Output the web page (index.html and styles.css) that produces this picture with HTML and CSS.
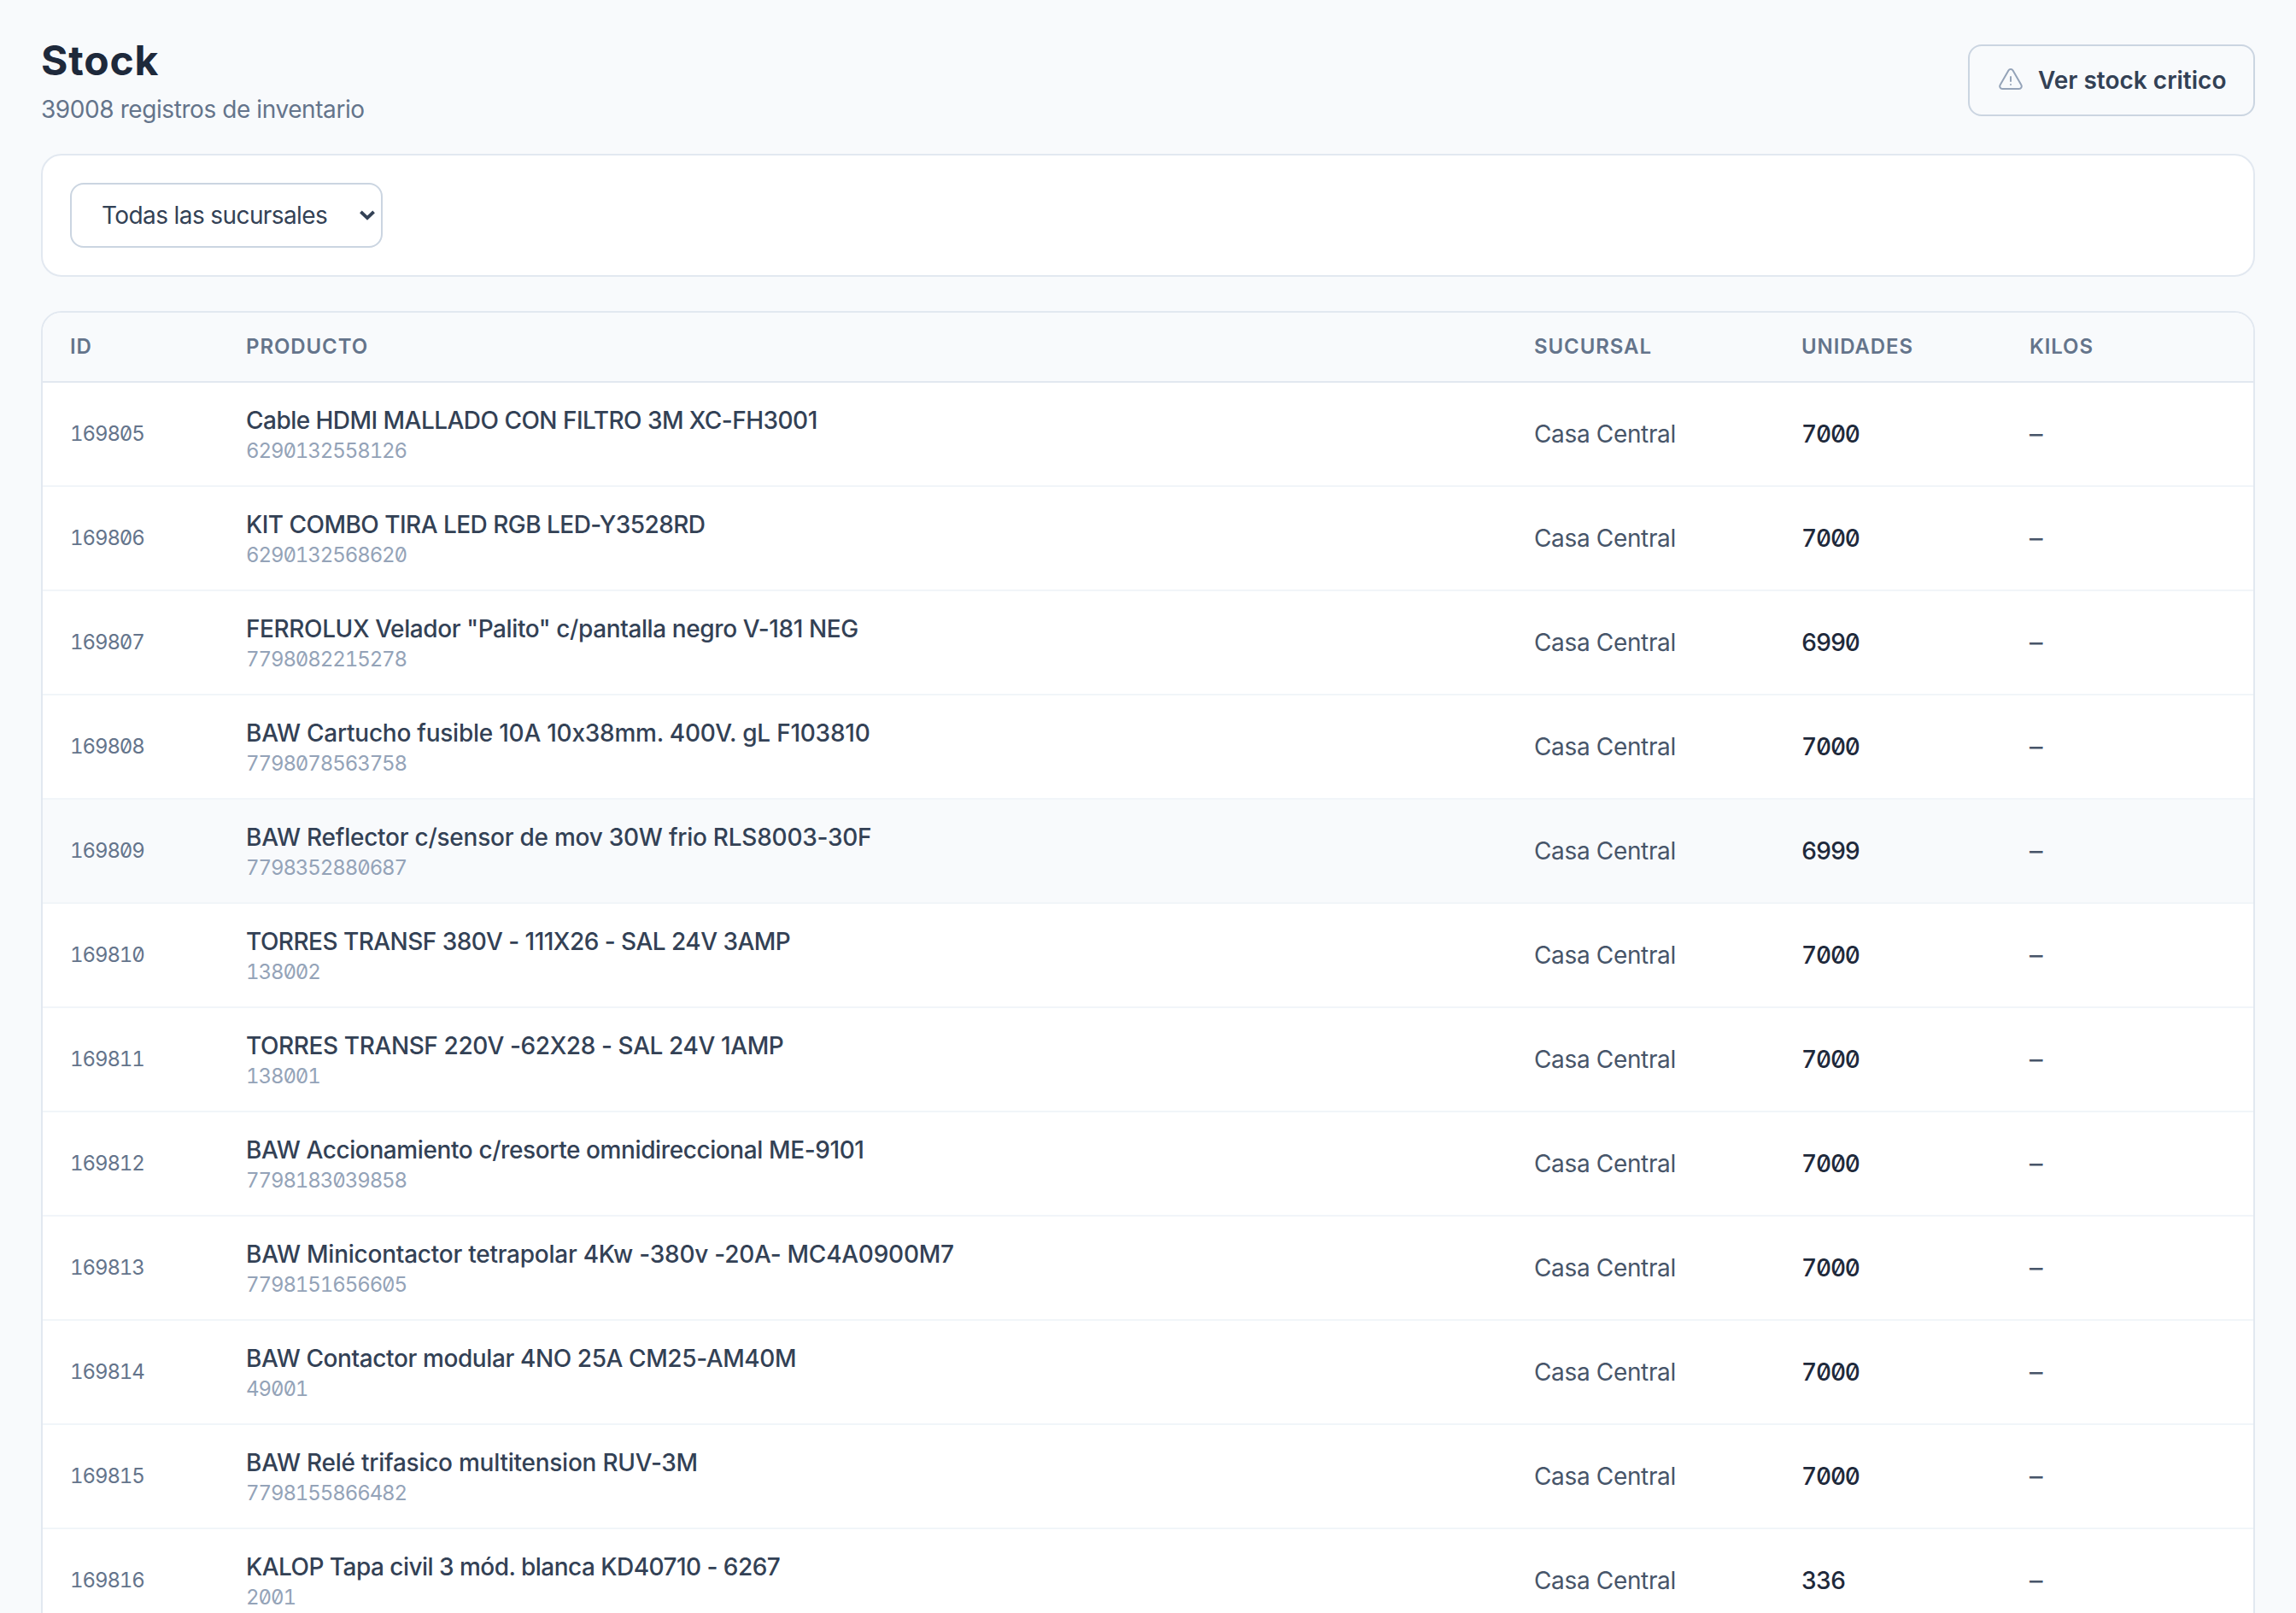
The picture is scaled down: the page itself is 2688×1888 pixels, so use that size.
FILE: index.html
```html
<!DOCTYPE html>
<html lang="es">
<head>
<meta charset="utf-8">
<title>Stock</title>
<link rel="stylesheet" href="styles.css">
</head>
<body>
<main class="page">
  <header class="page-header">
    <div>
      <h1 class="title">Stock</h1>
      <p class="subtitle">39008 registros de inventario</p>
    </div>
    <button class="btn" type="button">
      <svg class="btn-icon" viewBox="0 0 24 24" fill="none" stroke="currentColor" stroke-width="1.5" stroke-linecap="round" stroke-linejoin="round"><path d="M12 9v3.75m-9.303 3.376c-.866 1.5.217 3.374 1.948 3.374h14.71c1.73 0 2.813-1.874 1.948-3.374L13.949 3.378c-.866-1.5-3.032-1.5-3.898 0L2.697 16.126ZM12 15.75h.007v.008H12v-.008Z"/></svg>
      <span class="btn-label">Ver stock critico</span>
    </button>
  </header>

  <section class="filters">
    <div class="select">
      <span class="select-value">Todas las sucursales</span>
      <svg class="select-arrow" viewBox="0 0 18 12" fill="none" stroke="currentColor" stroke-width="3.8"><path d="M1.4 1.8 9 9.2l7.6-7.4"/></svg>
    </div>
  </section>

  <section class="table-card">
    <table class="table">
      <colgroup><col class="col-id"><col class="col-product"><col class="col-branch"><col class="col-units"><col class="col-kilos"></colgroup>
      <thead>
        <tr><th>ID</th><th>Producto</th><th>Sucursal</th><th>Unidades</th><th>Kilos</th></tr>
      </thead>
      <tbody>
        <tr><td class="id">169805</td><td><div class="name name-tight">Cable HDMI MALLADO CON FILTRO 3M XC-FH3001</div><div class="code">6290132558126</div></td><td class="branch">Casa Central</td><td class="units">7000</td><td class="kilos">–</td></tr>
        <tr><td class="id">169806</td><td><div class="name name-tight">KIT COMBO TIRA LED RGB LED-Y3528RD</div><div class="code">6290132568620</div></td><td class="branch">Casa Central</td><td class="units">7000</td><td class="kilos">–</td></tr>
        <tr><td class="id">169807</td><td><div class="name">FERROLUX Velador "Palito" c/pantalla negro V-181 NEG</div><div class="code">7798082215278</div></td><td class="branch">Casa Central</td><td class="units">6990</td><td class="kilos">–</td></tr>
        <tr><td class="id">169808</td><td><div class="name name-loose">BAW Cartucho fusible 10A 10x38mm. 400V. gL F103810</div><div class="code">7798078563758</div></td><td class="branch">Casa Central</td><td class="units">7000</td><td class="kilos">–</td></tr>
        <tr class="is-hovered"><td class="id">169809</td><td><div class="name name-loose">BAW Reflector c/sensor de mov 30W frio RLS8003-30F</div><div class="code">7798352880687</div></td><td class="branch">Casa Central</td><td class="units">6999</td><td class="kilos">–</td></tr>
        <tr><td class="id">169810</td><td><div class="name name-tight">TORRES TRANSF 380V - 111X26 - SAL 24V 3AMP</div><div class="code">138002</div></td><td class="branch">Casa Central</td><td class="units">7000</td><td class="kilos">–</td></tr>
        <tr><td class="id">169811</td><td><div class="name">TORRES TRANSF 220V -62X28 - SAL 24V 1AMP</div><div class="code">138001</div></td><td class="branch">Casa Central</td><td class="units">7000</td><td class="kilos">–</td></tr>
        <tr><td class="id">169812</td><td><div class="name">BAW Accionamiento c/resorte omnidireccional ME-9101</div><div class="code">7798183039858</div></td><td class="branch">Casa Central</td><td class="units">7000</td><td class="kilos">–</td></tr>
        <tr><td class="id">169813</td><td><div class="name name-loose">BAW Minicontactor tetrapolar 4Kw -380v -20A- MC4A0900M7</div><div class="code">7798151656605</div></td><td class="branch">Casa Central</td><td class="units">7000</td><td class="kilos">–</td></tr>
        <tr><td class="id">169814</td><td><div class="name">BAW Contactor modular 4NO 25A CM25-AM40M</div><div class="code">49001</div></td><td class="branch">Casa Central</td><td class="units">7000</td><td class="kilos">–</td></tr>
        <tr><td class="id">169815</td><td><div class="name name-loose">BAW Relé trifasico multitension RUV-3M</div><div class="code">7798155866482</div></td><td class="branch">Casa Central</td><td class="units">7000</td><td class="kilos">–</td></tr>
        <tr><td class="id">169816</td><td><div class="name name-tight">KALOP Tapa civil 3 mód. blanca KD40710 - 6267</div><div class="code">2001</div></td><td class="branch">Casa Central</td><td class="units">336</td><td class="kilos">–</td></tr>
      </tbody>
    </table>
  </section>
</main>
</body>
</html>
```
FILE: styles.css
```css
*, *::before, *::after { box-sizing: border-box; }

body {
  margin: 0;
  height: 1888px;
  overflow: hidden;
  background: #f8fafc;
  color: #334155;
  font-family: Inter, "Liberation Sans", sans-serif;
  font-size: 28px;
  line-height: 40px;
  -webkit-font-smoothing: antialiased;
}

.page { padding: 40px 48px 0; }

.page-header {
  display: flex;
  justify-content: space-between;
  align-items: flex-start;
  height: 140px;
}

.title {
  margin: 0;
  color: #1e293b;
  font-size: 48px;
  line-height: 62px;
  font-weight: 700;
  letter-spacing: 0.8px;
}

.subtitle {
  margin: 6px 0 0;
  color: #64748b;
  letter-spacing: -0.42px;
}

.btn {
  display: flex;
  align-items: center;
  gap: 16px;
  width: 336px;
  height: 84px;
  margin-top: 12px;
  padding: 0 32px;
  border: 2px solid #cbd5e1;
  border-radius: 16px;
  background: #f8fafc;
  color: #334155;
  font: inherit;
  font-weight: 600;
  white-space: nowrap;
}
.btn-icon { flex: none; width: 32px; height: 32px; color: #94a3b8; }
.btn-label { letter-spacing: 0; }

.filters {
  height: 144px;
  padding: 32px;
  border: 2px solid #e2e8f0;
  border-radius: 24px;
  background: #fff;
}

.select {
  display: flex;
  align-items: center;
  justify-content: space-between;
  width: 366px;
  height: 76px;
  padding: 0 7px 0 35px;
  border: 2px solid #cbd5e1;
  border-radius: 16px;
  background: #fff;
}
.select-value { letter-spacing: -0.6px; }
.select-arrow { width: 18px; height: 12px; }

.table-card {
  margin-top: 40px;
  border: 2px solid #e2e8f0;
  border-radius: 24px;
  background: #fff;
  overflow: hidden;
}

.table {
  width: 100%;
  table-layout: fixed;
  border-collapse: separate;
  border-spacing: 0;
}
.col-id { width: 206px; }
.col-product { width: 1508px; }
.col-branch { width: 313px; }
.col-units { width: 267px; }

.table th {
  height: 82px;
  padding: 0 32px;
  border-bottom: 2px solid #e2e8f0;
  background: #f8fafc;
  color: #64748b;
  font-size: 24px;
  line-height: 32px;
  font-weight: 600;
  letter-spacing: 0.9px;
  text-align: left;
  text-transform: uppercase;
}

.table td {
  height: 122px;
  padding: 0 32px;
  border-bottom: 2px solid #f1f5f9;
  vertical-align: middle;
  white-space: nowrap;
}
.is-hovered td { background: #f8fafc; }

.id, .code, .units { font-feature-settings: "tnum", "zero"; }
.table .id { color: #64748b; font-size: 24px; letter-spacing: -1.1px; }
.name { line-height: 40px; font-weight: 500; letter-spacing: -0.4px; }
.name-tight { letter-spacing: -0.53px; }
.name-loose { letter-spacing: -0.25px; }
.code { color: #94a3b8; font-size: 24px; line-height: 32px; letter-spacing: -1.1px; }
.branch { color: #475569; letter-spacing: -0.35px; }
.units { color: #1e293b; font-weight: 550; letter-spacing: -1.2px; }
.kilos { color: #475569; font-size: 31px; }
```
